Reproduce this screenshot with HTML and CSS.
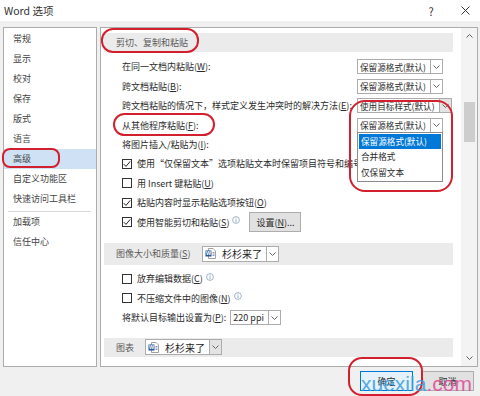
FILE: index.html
```html
<!DOCTYPE html>
<html lang="zh-CN">
<head>
  <meta charset="UTF-8" />
  <meta name="viewport" content="width=device-width, initial-scale=1" />
  <title>Word 选项</title>
  <link rel="stylesheet" href="styles.css">
</head>
<body>
  <div class="titlebar">
    <span class="title">Word 选项</span>
    <span class="tb-btn help">?</span>
    <span class="tb-btn close">
      <svg width="9" height="9" viewBox="0 0 9 9"><path d="M0.5 0.5L8.5 8.5M8.5 0.5L0.5 8.5" stroke="#333" stroke-width="1"/></svg>
    </span>
  </div>

  <div class="main">
    <ul class="nav">
      <li>常规</li>
      <li>显示</li>
      <li>校对</li>
      <li>保存</li>
      <li>版式</li>
      <li>语言</li>
      <li class="active">高级</li>
      <li>自定义功能区</li>
      <li>快速访问工具栏</li>
      <li class="sep"></li>
      <li>加载项</li>
      <li>信任中心</li>
    </ul>

    <div class="panel">
      <div class="content">
        <div class="band">剪切、复制和粘贴</div>

        <div class="opt">
          <span class="label">在同一文档内粘贴(<u>W</u>):</span>
          <div class="combo">
            <span class="combo-text">保留源格式(默认)</span>
            <span class="combo-btn"><svg width="7" height="4" viewBox="0 0 7 4"><path d="M0.5 0.5L3.5 3.5L6.5 0.5" fill="none" stroke="#666"/></svg></span>
          </div>
        </div>
        <div class="opt">
          <span class="label">跨文档粘贴(<u>B</u>):</span>
          <div class="combo">
            <span class="combo-text">保留源格式(默认)</span>
            <span class="combo-btn"><svg width="7" height="4" viewBox="0 0 7 4"><path d="M0.5 0.5L3.5 3.5L6.5 0.5" fill="none" stroke="#666"/></svg></span>
          </div>
        </div>
        <div class="opt">
          <span class="label">跨文档粘贴的情况下，样式定义发生冲突时的解决方法(<u>E</u>):</span>
          <div class="combo wide">
            <span class="combo-text">使用目标样式(默认)</span>
            <span class="combo-btn grey"><svg width="7" height="4" viewBox="0 0 7 4"><path d="M0.5 0.5L3.5 3.5L6.5 0.5" fill="none" stroke="#666"/></svg></span>
          </div>
        </div>
        <div class="opt">
          <span class="label">从其他程序粘贴(<u>F</u>):</span>
          <div class="combo">
            <span class="combo-text">保留源格式(默认)</span>
            <span class="combo-btn"><svg width="7" height="4" viewBox="0 0 7 4"><path d="M0.5 0.5L3.5 3.5L6.5 0.5" fill="none" stroke="#666"/></svg></span>
            <ul class="combo-list">
              <li class="selected">保留源格式(默认)</li>
              <li>合并格式</li>
              <li>仅保留文本</li>
            </ul>
          </div>
        </div>
        <div class="opt">
          <span class="label">将图片插入/粘贴为(<u>I</u>):</span>
          <div class="combo">
            <span class="combo-text"></span>
            <span class="combo-btn"></span>
          </div>
        </div>
        <div class="opt">
          <span class="cb"><svg width="8" height="8" viewBox="0 0 8 8"><path d="M0.8 4.2L3 6.4L7.2 1.4" fill="none" stroke="#222" stroke-width="1"/></svg></span>
          <span>使用“仅保留文本”选项粘贴文本时保留项目符号和编号(<u>L</u>)</span>
        </div>
        <div class="opt">
          <span class="cb"></span>
          <span>用 Insert 键粘贴(<u>U</u>)</span>
        </div>
        <div class="opt">
          <span class="cb"><svg width="8" height="8" viewBox="0 0 8 8"><path d="M0.8 4.2L3 6.4L7.2 1.4" fill="none" stroke="#222" stroke-width="1"/></svg></span>
          <span>粘贴内容时显示粘贴选项按钮(<u>O</u>)</span>
        </div>
        <div class="opt">
          <span class="cb"><svg width="8" height="8" viewBox="0 0 8 8"><path d="M0.8 4.2L3 6.4L7.2 1.4" fill="none" stroke="#222" stroke-width="1"/></svg></span>
          <span>使用智能剪切和粘贴(<u>S</u>)</span>
          <svg class="info" width="8" height="8" viewBox="0 0 8 8"><circle cx="4" cy="4" r="3.4" fill="none" stroke="#8aa2bd" stroke-width="0.8"/><path d="M4 3.3V6.2M4 1.8V2.6" stroke="#8aa2bd" stroke-width="0.9"/></svg>
          <button class="btn small">设置(<u>N</u>)...</button>
        </div>

        <div class="band tall">
          <span class="band-label pic">图像大小和质量(<u>S</u>)</span>
          <div class="combo doc">
            <span class="combo-text">
              <svg class="doc-icon" width="11" height="11" viewBox="0 0 11 11"><path d="M3.5 0.5H8L10.5 3V10.5H3.5Z" fill="#fff" stroke="#8a8a8a" stroke-width="0.8"/><path d="M7.5 4.5H9.5M7.5 6H9.5M7.5 7.5H9.5" stroke="#2b579a" stroke-width="0.6"/><rect x="0.5" y="2.5" width="6" height="6" fill="#2b579a"/><text x="3.5" y="7.3" font-size="5.5" fill="#fff" text-anchor="middle" font-family="Liberation Sans" font-weight="bold">W</text></svg>
              杉杉来了
            </span>
            <span class="combo-btn"><svg width="7" height="4" viewBox="0 0 7 4"><path d="M0.5 0.5L3.5 3.5L6.5 0.5" fill="none" stroke="#666"/></svg></span>
          </div>
        </div>

        <div class="opt">
          <span class="cb"></span>
          <span>放弃编辑数据(<u>C</u>)</span>
          <svg class="info" width="8" height="8" viewBox="0 0 8 8"><circle cx="4" cy="4" r="3.4" fill="none" stroke="#8aa2bd" stroke-width="0.8"/><path d="M4 3.3V6.2M4 1.8V2.6" stroke="#8aa2bd" stroke-width="0.9"/></svg>
        </div>
        <div class="opt">
          <span class="cb"></span>
          <span>不压缩文件中的图像(<u>N</u>)</span>
          <svg class="info" width="8" height="8" viewBox="0 0 8 8"><circle cx="4" cy="4" r="3.4" fill="none" stroke="#8aa2bd" stroke-width="0.8"/><path d="M4 3.3V6.2M4 1.8V2.6" stroke="#8aa2bd" stroke-width="0.9"/></svg>
        </div>
        <div class="opt">
          <span>将默认目标输出设置为(<u>P</u>):</span>
          <div class="combo ppi">
            <span class="combo-text">220 ppi</span>
            <span class="combo-btn"><svg width="7" height="4" viewBox="0 0 7 4"><path d="M0.5 0.5L3.5 3.5L6.5 0.5" fill="none" stroke="#666"/></svg></span>
          </div>
        </div>

        <div class="band last">
          <span class="band-label chart">图表</span>
          <div class="combo doc">
            <span class="combo-text">
              <svg class="doc-icon" width="11" height="11" viewBox="0 0 11 11"><path d="M3.5 0.5H8L10.5 3V10.5H3.5Z" fill="#fff" stroke="#8a8a8a" stroke-width="0.8"/><path d="M7.5 4.5H9.5M7.5 6H9.5M7.5 7.5H9.5" stroke="#2b579a" stroke-width="0.6"/><rect x="0.5" y="2.5" width="6" height="6" fill="#2b579a"/><text x="3.5" y="7.3" font-size="5.5" fill="#fff" text-anchor="middle" font-family="Liberation Sans" font-weight="bold">W</text></svg>
              杉杉来了
            </span>
            <span class="combo-btn grey"><svg width="7" height="4" viewBox="0 0 7 4"><path d="M0.5 0.5L3.5 3.5L6.5 0.5" fill="none" stroke="#666"/></svg></span>
          </div>
        </div>
      </div>

      <div class="scrollbar">
        <span class="sb-arrow"><svg width="7" height="4" viewBox="0 0 7 4"><path d="M0.5 3.5L3.5 0.5L6.5 3.5" fill="none" stroke="#606060"/></svg></span>
        <div class="sb-track"><div class="sb-thumb"></div></div>
        <span class="sb-arrow"><svg width="7" height="4" viewBox="0 0 7 4"><path d="M0.5 0.5L3.5 3.5L6.5 0.5" fill="none" stroke="#606060"/></svg></span>
      </div>
    </div>
  </div>

  <div class="footer">
    <button class="btn primary">确定</button>
    <button class="btn">取消</button>
  </div>

  <!-- 红色标注圈 -->
  <div class="mark m-cut"></div>
  <div class="mark m-other"></div>
  <div class="mark m-adv"></div>
  <div class="mark m-list"></div>
  <div class="mark m-ok"></div>

  <div class="watermark">xuexila<span>.com</span></div>
</body>
</html>
```

FILE: styles.css
```css
* {
  box-sizing: border-box;
}
body {
  margin: 0;
  width: 480px;
  height: 396px;
  overflow: hidden;
  position: relative;
  background: #f0f0f0;
  font-family: "Noto Sans CJK SC", sans-serif;
  font-size: 9px;
  color: #2b2b2b;
}
u {
  text-decoration-thickness: 1px;
  text-underline-offset: 1px;
}
.titlebar {
  height: 21px;
  background: #fff;
  display: flex;
  align-items: center;
  padding-left: 4px;
}
.title {
  flex: 1;
  font-size: 10.5px;
  color: #333;
}
.tb-btn {
  width: 30px;
  height: 21px;
  display: flex;
  align-items: center;
  justify-content: center;
  font-size: 11px;
  color: #333;
}
.help {
  margin-right: 4px;
}
.main {
  display: flex;
  gap: 3px;
  height: 346px;
  padding: 6px 2px 0 3px;
}
.nav {
  width: 94px;
  margin: 0;
  padding: 1px 0 0;
  list-style: none;
  background: #fff;
  border: 1px solid #acacac;
}
.nav li {
  height: 20px;
  line-height: 20px;
  padding-left: 9px;
  color: #444;
}
.nav li.active {
  background: #cfe2f5;
}
.nav li.sep {
  height: 3px;
  margin: 0 5px 0 4px;
  border-bottom: 1px solid #d9d9d9;
}
.panel {
  flex: 1;
  display: flex;
  background: #fff;
  border: 1px solid #acacac;
}
.content {
  flex: 1;
  overflow: hidden;
  padding: 5px 8px 0 3px;
}
.band {
  height: 19px;
  display: flex;
  align-items: center;
  padding-left: 12px;
  background: #ebebeb;
  color: #5a5a5a;
  margin-bottom: 5.3px;
}
.band.tall {
  height: 22px;
  margin-top: 11px;
  margin-bottom: 4.4px;
}
.band.last {
  margin-top: 10.5px;
}
.band-label.pic {
  width: 86px;
}
.band-label.chart {
  width: 29px;
}
.opt {
  height: 19.4px;
  display: flex;
  align-items: center;
  padding-left: 18px;
  white-space: nowrap;
}
.opt .label {
  flex: none;
  width: 235px;
}
.cb {
  flex: none;
  width: 10px;
  height: 10px;
  margin-right: 5px;
  border: 1px solid #333;
  background: #fff;
  display: flex;
  align-items: center;
  justify-content: center;
}
.info {
  margin: -4px 0 0 3px;
  flex: none;
}
.combo {
  position: relative;
  flex: none;
  width: 86px;
  height: 15px;
  display: flex;
  background: #fff;
  border: 1px solid #acacac;
  font-size: 8.6px;
}
.combo.wide {
  width: 95px;
}
.combo.ppi {
  width: 51px;
  margin-left: 4px;
  font-size: 9px;
}
.combo.doc {
  width: 77px;
  height: 16px;
}
.combo-text {
  flex: 1;
  display: flex;
  align-items: center;
  padding-left: 2px;
  gap: 6px;
  overflow: hidden;
}
.combo.doc .combo-text {
  font-size: 10px;
  color: #222;
}
.combo-btn {
  width: 12px;
  border-left: 1px solid #acacac;
  display: flex;
  align-items: center;
  justify-content: center;
}
.combo-btn.grey {
  background: #e3e3e3;
}
.combo-list {
  position: absolute;
  z-index: 2;
  left: -1px;
  top: 100%;
  width: 86px;
  margin: 0;
  padding: 1px;
  list-style: none;
  background: #fff;
  border: 1px solid #8c8c8c;
}
.combo-list li {
  height: 15.6px;
  line-height: 15.6px;
  padding-left: 2px;
}
.combo-list li.selected {
  background: #0078d7;
  color: #fff;
}
.btn {
  font: inherit;
  color: #2b2b2b;
  width: 53px;
  height: 20px;
  padding: 0;
  background: #e1e1e1;
  border: 1px solid #adadad;
}
.btn.small {
  width: 52px;
  margin-left: 9px;
}
.btn.primary {
  background: #e5f1fb;
  border-color: #0078d7;
}
.scrollbar {
  width: 16px;
  display: flex;
  flex-direction: column;
  background: #f3f3f3;
}
.sb-arrow {
  height: 16px;
  display: flex;
  align-items: center;
  justify-content: center;
}
.sb-track {
  flex: 1;
  padding: 58px 2px 0 3px;
}
.sb-thumb {
  height: 40px;
  background: #cdcdcd;
}
.footer {
  display: flex;
  justify-content: flex-end;
  gap: 8px;
  padding: 4px 6px 0 0;
}
.mark {
  position: absolute;
  border: 2.5px solid #d3202f;
  border-radius: 12px;
}
.m-cut {
  left: 101px;
  top: 28px;
  width: 98px;
  height: 25px;
}
.m-other {
  left: 113px;
  top: 113px;
  width: 102px;
  height: 23px;
}
.m-adv {
  left: 2px;
  top: 148px;
  width: 58px;
  height: 20px;
  border-radius: 8px;
}
.m-list {
  left: 349px;
  top: 100px;
  width: 104px;
  height: 92px;
  border-radius: 16px;
}
.m-ok {
  left: 348px;
  top: 357px;
  width: 75px;
  height: 39px;
  border-radius: 14px;
}
.watermark {
  position: absolute;
  left: 361px;
  top: 372px;
  font-family: "Liberation Sans", Arial, sans-serif;
  font-size: 21px;
  color: #3a9fdb;
  opacity: 0.85;
}
.watermark span {
  color: #e0489b;
}
```
